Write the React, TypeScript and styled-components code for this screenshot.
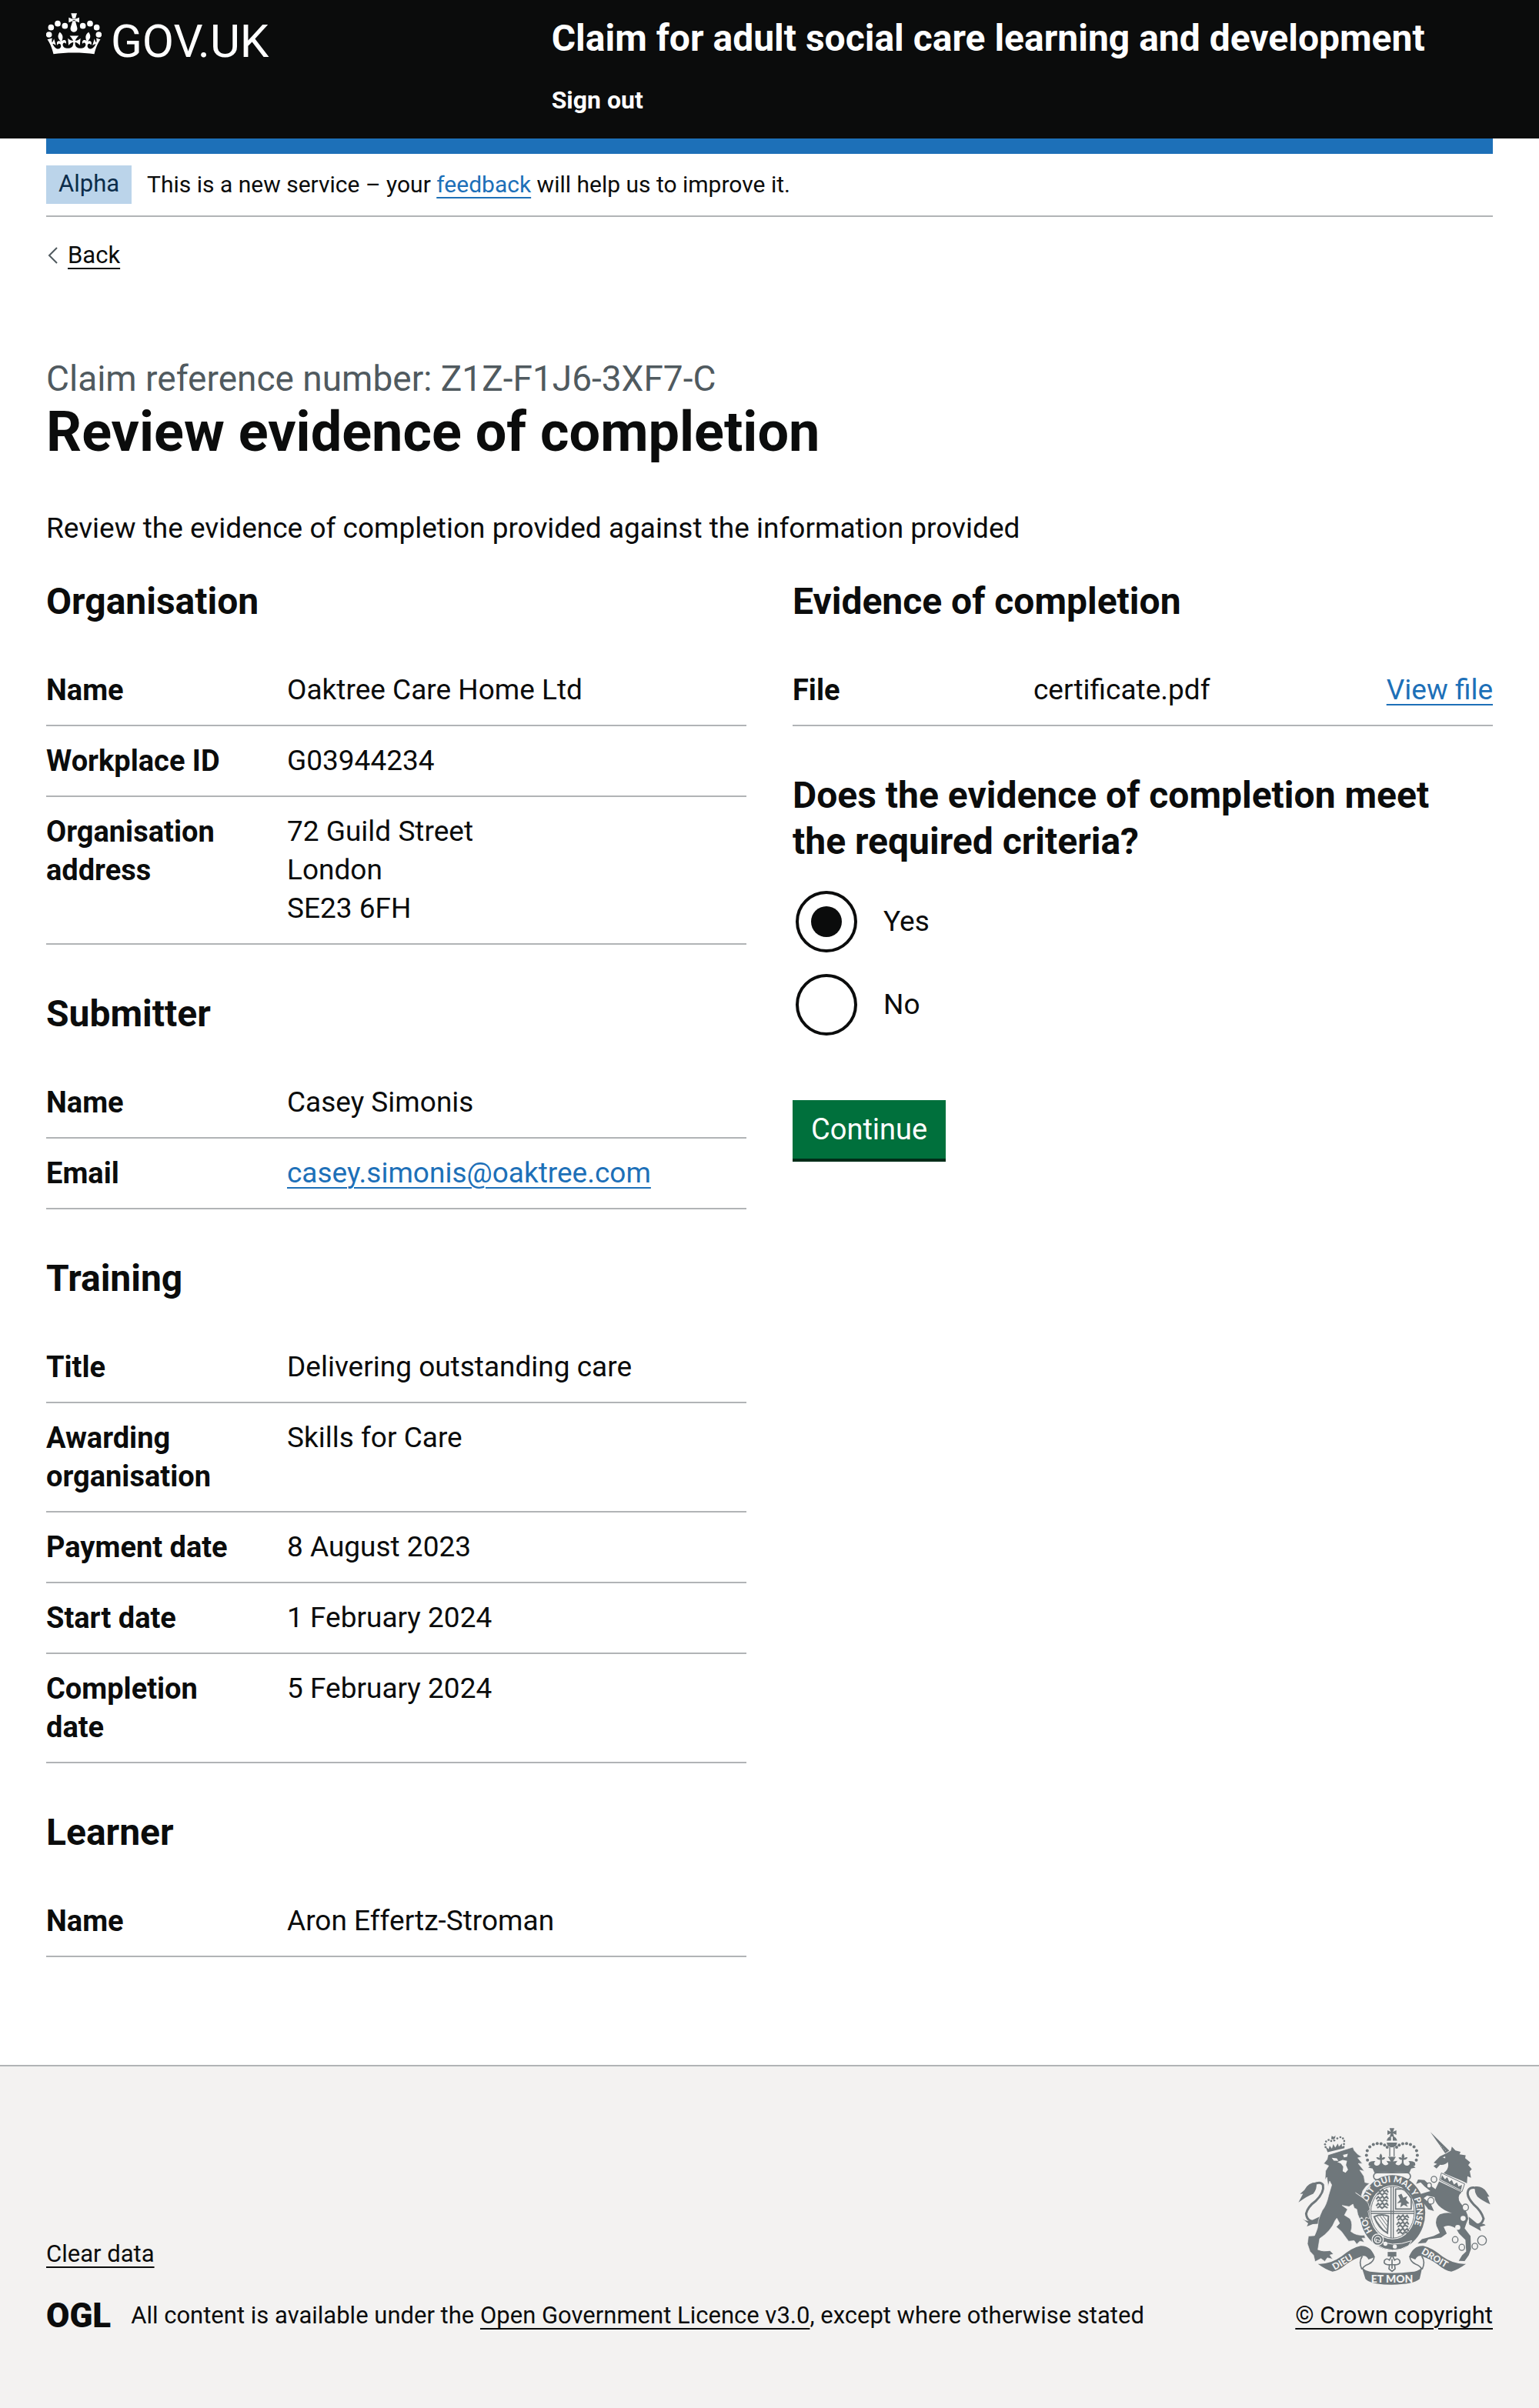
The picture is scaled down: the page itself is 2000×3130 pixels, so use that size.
import React, { useState } from "react";
import styled, { createGlobalStyle } from "styled-components";

const ink = "#0b0c0c";
const blue = "#1d70b8";
const rule = "#b1b4b6";
const paper = "#f3f2f1";
const crestGrey = "#6f777b";

const GlobalStyle = createGlobalStyle`
  *, *::before, *::after { box-sizing: border-box; }
  body {
    margin: 0;
    background: #ffffff;
    color: ${ink};
    font-family: Roboto, "Liberation Sans", Arial, sans-serif;
    font-size: 37px;
    line-height: 50px;
  }
  h1, h2, p, dl, dd, dt, fieldset, legend { margin: 0; padding: 0; }
`;

const Container = styled.div`
  margin: 0 60px;
`;

const Link = styled.a<{ $tone?: "ink" }>`
  color: ${(p) => (p.$tone === "ink" ? ink : blue)};
  text-decoration: underline;
  text-decoration-thickness: 2px;
  text-underline-offset: 6px;
`;

/* Header */

const Header = styled.header`
  background: ${ink};
  color: #ffffff;
`;

const HeaderInner = styled(Container)`
  display: grid;
  grid-template-columns: 1fr 2fr;
  padding: 20px 0 30px;
`;

const HomeLink = styled.a`
  display: flex;
  align-items: center;
  gap: 12px;
  height: 60px;
  color: #ffffff;
  text-decoration: none;
`;

const Wordmark = styled.span`
  padding-top: 8px;
  font-size: 60px;
  font-weight: 400;
  line-height: 60px;
`;

const CrownDrawing = styled.svg`
  display: block;
  flex: none;
  width: 72px;
  height: 54px;
  margin-bottom: 12px;
`;

const HeaderContent = styled.div`
  display: flex;
  flex-direction: column;
  align-items: flex-start;
  gap: 30px;
  padding-left: 30px;
`;

const ServiceName = styled.a`
  color: #ffffff;
  font-size: 48px;
  font-weight: 700;
  line-height: 60px;
  text-decoration: none;
`;

const HeaderNavLink = styled.a`
  display: block;
  color: #ffffff;
  font-size: 32px;
  font-weight: 700;
  line-height: 40px;
  text-decoration: none;
`;

const BlueBar = styled(Container)`
  height: 20px;
  background: ${blue};
`;

/* Phase banner and back link */

const PhaseBanner = styled(Container)`
  display: flex;
  align-items: center;
  gap: 20px;
  height: 82px;
  border-bottom: 2px solid ${rule};
  font-size: 30px;
  line-height: 40px;
`;

const Tag = styled.strong`
  padding: 4px 16px 6px;
  background: #bbd4ea;
  color: #0c2d4a;
  font-size: 31px;
  font-weight: 400;
`;

const BackRow = styled(Container)`
  display: flex;
  padding: 30px 0;
  font-size: 31px;
  line-height: 40px;
`;

const BackLink = styled(Link)`
  display: flex;
  align-items: center;
  gap: 12px;
`;

const Chevron = styled.svg`
  width: 16px;
  height: 22px;
`;

/* Main content */

const Main = styled.main`
  margin: 0 60px;
  padding: 80px 0;
`;

const Caption = styled.span`
  display: block;
  color: #505a5f;
  font-size: 46px;
  font-weight: 400;
  line-height: 60px;
`;

const PageTitle = styled.h1`
  margin-bottom: 60px;
  font-size: 72px;
  font-weight: 700;
  line-height: 80px;
`;

const Intro = styled.p`
  margin-bottom: 40px;
`;

const Columns = styled.div`
  display: grid;
  grid-template-columns: repeat(2, minmax(0, 1fr));
  gap: 60px;
  padding-bottom: 60px;
`;

const Column = styled.div`
  display: flex;
  flex-direction: column;
  gap: 60px;
`;

const SectionTitle = styled.h2`
  margin-bottom: 40px;
  font-size: 48px;
  font-weight: 700;
  line-height: 60px;
`;

const Row = styled.div`
  display: grid;
  grid-template-columns: 30% 1fr auto;
  column-gap: 40px;
  padding: 20px 0;
  border-bottom: 2px solid ${rule};
`;

const Key = styled.dt`
  font-size: 38px;
  font-weight: 700;
`;

const Value = styled.dd`
  white-space: pre-line;
`;

/* Form */

const Form = styled.form`
  display: flex;
  flex-direction: column;
  align-items: flex-start;
  gap: 80px;
`;

const Fieldset = styled.fieldset`
  border: 0;
  min-width: 0;
`;

const Legend = styled.legend`
  padding-right: 60px;
  margin-bottom: 30px;
  font-size: 48px;
  font-weight: 700;
  line-height: 60px;
`;

const Options = styled.div`
  display: flex;
  flex-direction: column;
  gap: 20px;
`;

const Option = styled.div`
  display: flex;
  align-items: center;
  padding: 4px;
`;

const Radio = styled.input`
  appearance: none;
  flex: none;
  width: 80px;
  height: 80px;
  margin: 0;
  padding: 16px;
  border: 4px solid ${ink};
  border-radius: 50%;
  background: #ffffff;
  cursor: pointer;
  &:checked {
    background: ${ink} content-box;
  }
`;

const RadioLabel = styled.label`
  padding: 15px 34px;
  cursor: pointer;
`;

const Button = styled.button`
  height: 76px;
  padding: 0 24px;
  border: 0;
  background: #00703c;
  box-shadow: 0 4px 0 #002d18;
  color: #ffffff;
  font-family: inherit;
  font-size: 38px;
  line-height: 50px;
  cursor: pointer;
`;

/* Footer */

const Footer = styled.footer`
  border-top: 2px solid ${rule};
  background: ${paper};
  padding: 80px 0 100px;
  font-size: 31px;
  line-height: 40px;
`;

const FooterInner = styled(Container)`
  display: flex;
  align-items: flex-end;
  justify-content: space-between;
  gap: 60px;
`;

const FooterMeta = styled.div`
  display: flex;
  flex-direction: column;
  align-items: flex-start;
  gap: 40px;
`;

const Licence = styled.div`
  display: flex;
  align-items: center;
  gap: 26px;
`;

const OglMark = styled.span`
  font-size: 44px;
  font-weight: 900;
  line-height: 40px;
`;

const CrestLink = styled(Link)`
  display: flex;
  flex-direction: column;
  align-items: center;
  gap: 20px;
`;

const CrestDrawing = styled.svg`
  display: block;
  width: 250px;
  height: 204px;
`;

const CrestText = styled.text`
  fill: ${paper};
  font-family: Lato, Roboto, sans-serif;
  font-weight: 900;
`;

const pearls = [
  [105, 91], [79, 106], [71, 134], [133, 100],
  [231, 91], [257, 106], [265, 134], [203, 100],
];

function Crown() {
  return (
    <CrownDrawing viewBox="60 50 216 162" aria-hidden="true" fill="#ffffff">
      {pearls.map(([x, y]) => (
        <circle key={`${x}-${y}`} cx={x} cy={y} r="11.5" />
      ))}
      <path d="M157 51H180L174 72H163ZM148 67L163 73H173L189 67V87L173 81H163L148 87ZM164 78L155 107A13.5 13.5 0 1 0 181 107L173 78Z" />
      <g transform="translate(64.5 15.9) scale(6.47)">
        <path d="M16 29.2c4.4 0 8.6.3 12.3.8 1.1-4.5 2.4-7 3.7-8.8l-2.5-.9c.2 1.3.3 1.9 0 2.7-.4-.4-.8-1.1-1.1-2.3l-1.2 4c.7-.5 1.3-.8 2-.9-1.1 2.5-2.6 3.1-3.5 3-1.1-.2-1.7-1.2-1.5-2.1.3-1.2 1.5-1.5 2.1-.1 1.1-2.3-.8-3-2-2.3 1.9-1.9 2.1-3.5.6-5.6-2.1 1.6-2.1 3.2-1.2 5.5-1.2-1.4-3.2-.6-2.5 1.6.9-1.4 2.1-.5 1.9.8-.2 1.1-1.7 2.1-3.5 1.9-2.7-.2-2.9-2.1-2.9-3.6.7-.1 1.9.5 2.9 1.9l.4-4.3c-1.1 1.1-2.1 1.4-3.2 1.4.4-1.2 2.1-3 2.1-3h-5.4s1.7 1.9 2.1 3c-1.1 0-2.1-.2-3.2-1.4l.4 4.3c1-1.4 2.2-2 2.9-1.9-.1 1.5-.2 3.4-2.9 3.6-1.9.2-3.4-.8-3.5-1.9-.2-1.3 1-2.2 1.9-.8.7-2.3-1.2-3-2.5-1.6.9-2.2.9-3.9-1.2-5.5-1.5 2-1.3 3.7.6 5.6-1.2-.7-3.1 0-2 2.3.6-1.4 1.8-1.1 2.1.1.2.9-.3 1.9-1.5 2.1-.9.2-2.4-.5-3.5-3 .6 0 1.2.3 2 .9l-1.2-4c-.3 1.1-.7 1.9-1.1 2.3-.3-.8-.2-1.4 0-2.7l-2.9.9C1.3 23 2.6 25.5 3.7 30c3.7-.5 7.9-.8 12.3-.8" />
      </g>
    </CrownDrawing>
  );
}

const archPearls = [
  [352, 220], [342, 203], [338, 184], [341, 166], [351, 151],
  [365, 142], [380, 138], [395, 139], [409, 144], [419, 152],
];

const lionCrownPearls = [
  [178, 152], [176, 141], [180, 130], [190, 124], [200, 128], [212, 126],
  [224, 118], [236, 113], [246, 118], [251, 128], [250, 140],
];

const chain = [
  [602, 278, 12], [583, 302, 10], [590, 362, 13], [725, 388, 13],
  [685, 514, 12], [711, 544, 12], [762, 540, 12], [790, 517, 18],
];

function CrownHalf() {
  return (
    <g>
      {archPearls.map(([x, y]) => (
        <circle key={`${x}-${y}`} cx={x} cy={y} r="6" />
      ))}
      <path d="M417 127Q420 112 434 109V127Z" />
      <rect x="427" y="152" width="4" height="36" />
      <path d="M438 252Q400 246 370 254L362 236L345 232L356 224L346 213Q358 205 373 207Q362 217 374 224Q388 227 392 213V202Q380 202 376 192Q386 189 390 196Q386 186 394 177Q402 186 398 196Q404 189 412 193Q408 202 398 202L399 214Q410 229 424 218L416 206L433 208L422 190H438Z" />
    </g>
  );
}

function LionMarks({ x, y }: { x: number; y: number }) {
  return (
    <g fill="none" stroke={crestGrey} strokeWidth="6">
      {[0, 26, 52].map((dy) => (
        <path
          key={dy}
          d={`M${x} ${y + dy + 8}l8 -10l7 7l10 -9l6 9l10 -8l6 10M${x + 4} ${y + dy + 16}l10 -7l9 8l10 -8l12 7`}
        />
      ))}
    </g>
  );
}

function Crest() {
  return (
    <CrestDrawing viewBox="72 77 750 614" aria-hidden="true" fill={crestGrey}>
      <defs>
        <path id="garter" d="M400 513A98 116 0 1 1 505 488" />
      </defs>

      {/* crown above the shield */}
      <path d="M428 78H447L442 92L455 86V104L442 98L446 111H429L433 98L420 104V86L433 92Z" />
      <path d="M417 134H458Q456 152 437.500 153Q419 152 417 134Z" />
      <CrownHalf />
      <g transform="translate(875 0) scale(-1 1)">
        <CrownHalf />
      </g>
      <rect x="366" y="252" width="144" height="28" rx="14" fill={paper} stroke={crestGrey} strokeWidth="5" />

      {/* garter and shield */}
      <ellipse cx="440" cy="408" rx="128" ry="147" />
      <ellipse cx="440" cy="407" rx="90" ry="106" fill={paper} />
      <ellipse cx="440" cy="407" rx="85" ry="101" fill="none" stroke={crestGrey} strokeWidth="3" />
      <path d="M355 403H525M355 411H525M434 306V508M443 306V508" fill="none" stroke={crestGrey} strokeWidth="4" />
      <LionMarks x={376} y={322} />
      <LionMarks x={456} y={422} />
      <path d="M452 316V394H513V350L486 316Z" fill="none" stroke={crestGrey} strokeWidth="5" />
      <path d="M462 340L475 334L482 350L498 344L492 358L506 372L494 374L500 386L484 378L470 388L474 368L458 372L470 358Z" />
      <path d="M368 424Q395 412 424 422L420 488Q385 470 368 424Z" fill="none" stroke={crestGrey} strokeWidth="6" />
      <path d="M380 424L418 476M391 421L419 460M402 420L420 444M374 436L408 482" fill="none" stroke={crestGrey} strokeWidth="3" />
      <CrestText fontSize="34">
        <textPath href="#garter" startOffset="9%">HONI SOIT QUI MAL Y PENSE</textPath>
      </CrestText>
      <path d="M376 512Q435 548 515 518L502 538Q440 574 376 534Z" stroke={paper} strokeWidth="3" />
      <circle cx="382" cy="514" r="17" fill="none" stroke={paper} strokeWidth="14" />
      <circle cx="382" cy="514" r="17" fill="none" stroke={crestGrey} strokeWidth="6" />
      <circle cx="412" cy="530" r="8" fill={paper} />
      <circle cx="449" cy="541" r="8" fill={paper} />

      {/* pendant */}
      <path d="M421 562H455V580H421Z" />
      <path d="M438 574L448 594Q460 584 468 596Q472 610 456 612L448 612L450 628L438 638L426 628L428 612L420 612Q404 610 408 596Q416 584 428 594Z" fill={paper} stroke={crestGrey} strokeWidth="5" />
      <path d="M438 590V628M424 612H452" fill="none" stroke={crestGrey} strokeWidth="5" />

      {/* lion */}
      <path d="M153 440Q106 452 102 412Q108 385 140 362Q174 328 168 300Q158 284 132 298" fill="none" stroke={crestGrey} strokeWidth="9" />
      <path d="M142 290Q110 290 95 320L78 335L90 334L72 368Q108 342 130 334Q146 315 142 290Z" />
      <path d="M88 432Q104 446 125 438L158 422L152 452L128 453L105 462L110 450Z" />
      <path
        stroke={paper}
        strokeWidth="2"
        d="M188 182L285 152L290 165L304 180L320 190L304 194L322 216L306 216L330 246L312 242L328 266L332 290L350 294L336 306L324 322L318 342L345 372L352 396L344 402L350 432L336 426L330 442L320 426L311 432L304 415L300 395L290 390L285 375L270 385L243 380L264 395L252 418L274 432Q286 452 277 482Q300 500 330 496L334 508L320 508L330 524L312 520L300 532L290 518L268 520L240 482L220 464L233 450L222 430L215 440Q200 480 155 510L148 553Q170 562 195 557L209 570L195 574L206 590L185 585L175 599L160 588L137 600L131 575L117 560L107 530L111 500L135 498Q150 470 150 440Q155 420 165 400Q182 378 190 340L202 300L194 285L188 305L183 270L176 280L178 245L190 225L171 216L184 200Z"
      />
      <path d="M202 194L222 196L228 206L210 205ZM246 182L265 178L262 190L250 192ZM224 210L245 202L262 206L258 222L266 240L256 252L245 246L247 228L238 216Z" fill={paper} />
      <path d="M295 330L345 365" stroke={paper} strokeWidth="3" />
      <path d="M186 172L178 150L190 160L194 146L203 158L208 140L216 154L226 138L230 150L242 138L242 150L252 146L252 156Z" />
      {lionCrownPearls.map(([x, y]) => (
        <circle key={`${x}-${y}`} cx={x} cy={y} r="4" />
      ))}
      <path d="M202 108L210 112L217 106L215 118L208 122L200 120Z" />

      {/* unicorn */}
      <path d="M588 93L662 166L646 176Z" />
      <path d="M588 108L652 170" stroke={paper} strokeWidth="2" strokeDasharray="4 6" />
      <path d="M601 213L625 188L650 176L668 166L672 150L686 165L706 170L702 180L726 184L724 195L744 212L736 222L750 238L742 246L747 272L733 266L731 294L712 284L640 254Q664 236 656 210Q644 224 626 221L612 236L600 226L614 218Z" />
      <path d="M636 192L646 188L646 196Z" fill={paper} />
      <path d="M631 253L722 296L712 326L624 281Z" fill={paper} stroke={crestGrey} strokeWidth="3" />
      <path d="M628 279L634 262L645 278L654 270L662 288L672 280L680 298L692 290L698 306L712 300L708 320Z" />
      <path d="M622 286L710 328Q690 346 705 370Q732 400 736 432Q728 450 722 470L745 500L747 550L738 575L722 598L699 597L712 575L728 560L725 515L700 490L688 470Q660 452 640 464L652 490L630 506L580 513L570 526L538 529L555 512L600 500L625 488L612 460Q604 430 625 415Q650 406 672 410Q640 400 620 380Q606 365 604 348L575 342L562 352L590 375L602 402L580 395L555 362L548 336L588 324L565 306L550 290L532 296L540 279L565 281L585 300L608 316Z" />
      <path d="M740 444Q785 472 796 432Q788 402 757 376Q724 340 738 318Q750 304 778 316" fill="none" stroke={crestGrey} strokeWidth="9" />
      <path d="M763 306Q790 302 806 325L819 346L811 346L822 376Q790 362 772 346Q758 326 763 306Z" />
      <path d="M738 424L772 452Q796 448 804 458L782 464L786 480L765 468L740 455Z" />
      {chain.map(([x, y, r]) => (
        <ellipse key={`${x}-${y}`} cx={x} cy={y} rx={r - 1} ry={r} fill={paper} stroke={crestGrey} strokeWidth="4" />
      ))}
      <circle cx="716" cy="431" r="10" fill={paper} />
      <circle cx="695" cy="466" r="10" fill={paper} />

      {/* motto ribbon */}
      <path d="M322 578Q306 600 320 630M368 580Q368 600 346 610Q325 618 322 630M554 578Q570 600 556 630M508 580Q508 600 530 610Q550 618 554 630" fill="none" stroke={crestGrey} strokeWidth="5" />
      <path d="M148 609Q195 612 240 580Q280 545 315 538Q354 536 371 582L346 592Q338 574 322 578Q290 588 260 610Q230 636 205 639Q180 632 148 609Z" />
      <path d="M727 609Q680 612 635 580Q595 545 560 538Q521 536 504 582L529 592Q537 574 553 578Q585 588 615 610Q645 636 670 639Q695 632 727 609Z" />
      <path d="M320 623Q340 640 360 640Q437 650 515 640Q535 640 556 623L546 668Q520 690 437 690Q355 690 334 668Z" />
      <CrestText fontSize="36" transform="translate(214 634) rotate(-31)">DIEU</CrestText>
      <CrestText fontSize="36" transform="translate(551 567) rotate(31)">DROIT</CrestText>
      <CrestText fontSize="42" x="438" y="682" textAnchor="middle">ET MON</CrestText>
    </CrestDrawing>
  );
}

type Item = { key: string; value: React.ReactNode; action?: React.ReactNode };

function Summary({ title, items }: { title: string; items: Item[] }) {
  return (
    <section>
      <SectionTitle>{title}</SectionTitle>
      <dl>
        {items.map((item) => (
          <Row key={item.key}>
            <Key>{item.key}</Key>
            <Value>{item.value}</Value>
            {item.action && <dd>{item.action}</dd>}
          </Row>
        ))}
      </dl>
    </section>
  );
}

export default function App() {
  const [answer, setAnswer] = useState("Yes");

  return (
    <>
      <GlobalStyle />
      <Header>
        <HeaderInner>
          <HomeLink href="#home">
            <Crown />
            <Wordmark>GOV.UK</Wordmark>
          </HomeLink>
          <HeaderContent>
            <ServiceName href="#service">Claim for adult social care learning and development</ServiceName>
            <HeaderNavLink href="#sign-out">Sign out</HeaderNavLink>
          </HeaderContent>
        </HeaderInner>
      </Header>
      <BlueBar />
      <PhaseBanner>
        <Tag>Alpha</Tag>
        <span>
          This is a new service – your <Link href="#feedback">feedback</Link> will help us to improve it.
        </span>
      </PhaseBanner>
      <BackRow>
        <BackLink href="#back" $tone="ink">
          <Chevron viewBox="0 0 16 22" aria-hidden="true">
            <path d="M14 1L4 11L14 21" fill="none" stroke="#505a5f" strokeWidth="2" />
          </Chevron>
          Back
        </BackLink>
      </BackRow>

      <Main>
        <PageTitle>
          <Caption>Claim reference number: Z1Z-F1J6-3XF7-C</Caption>
          Review evidence of completion
        </PageTitle>
        <Intro>Review the evidence of completion provided against the information provided</Intro>

        <Columns>
          <Column>
            <Summary
              title="Organisation"
              items={[
                { key: "Name", value: "Oaktree Care Home Ltd" },
                { key: "Workplace ID", value: "G03944234" },
                { key: "Organisation address", value: "72 Guild Street\nLondon\nSE23 6FH" },
              ]}
            />
            <Summary
              title="Submitter"
              items={[
                { key: "Name", value: "Casey Simonis" },
                {
                  key: "Email",
                  value: <Link href="mailto:casey.simonis@oaktree.com">casey.simonis@oaktree.com</Link>,
                },
              ]}
            />
            <Summary
              title="Training"
              items={[
                { key: "Title", value: "Delivering outstanding care" },
                { key: "Awarding organisation", value: "Skills for Care" },
                { key: "Payment date", value: "8 August 2023" },
                { key: "Start date", value: "1 February 2024" },
                { key: "Completion date", value: "5 February 2024" },
              ]}
            />
            <Summary title="Learner" items={[{ key: "Name", value: "Aron Effertz-Stroman" }]} />
          </Column>

          <Column>
            <Summary
              title="Evidence of completion"
              items={[
                {
                  key: "File",
                  value: "certificate.pdf",
                  action: <Link href="#view-file">View file</Link>,
                },
              ]}
            />
            <Form onSubmit={(event) => event.preventDefault()}>
              <Fieldset>
                <Legend>Does the evidence of completion meet the required criteria?</Legend>
                <Options>
                  {["Yes", "No"].map((option) => (
                    <Option key={option}>
                      <Radio
                        type="radio"
                        id={`criteria-${option}`}
                        name="criteria"
                        value={option}
                        checked={answer === option}
                        onChange={() => setAnswer(option)}
                      />
                      <RadioLabel htmlFor={`criteria-${option}`}>{option}</RadioLabel>
                    </Option>
                  ))}
                </Options>
              </Fieldset>
              <Button type="submit">Continue</Button>
            </Form>
          </Column>
        </Columns>
      </Main>

      <Footer>
        <FooterInner>
          <FooterMeta>
            <Link href="#clear-data" $tone="ink">Clear data</Link>
            <Licence>
              <OglMark>OGL</OglMark>
              <span>
                All content is available under the{" "}
                <Link href="#licence" $tone="ink">Open Government Licence v3.0</Link>, except where otherwise stated
              </span>
            </Licence>
          </FooterMeta>
          <CrestLink href="#copyright" $tone="ink">
            <Crest />
            © Crown copyright
          </CrestLink>
        </FooterInner>
      </Footer>
    </>
  );
}
